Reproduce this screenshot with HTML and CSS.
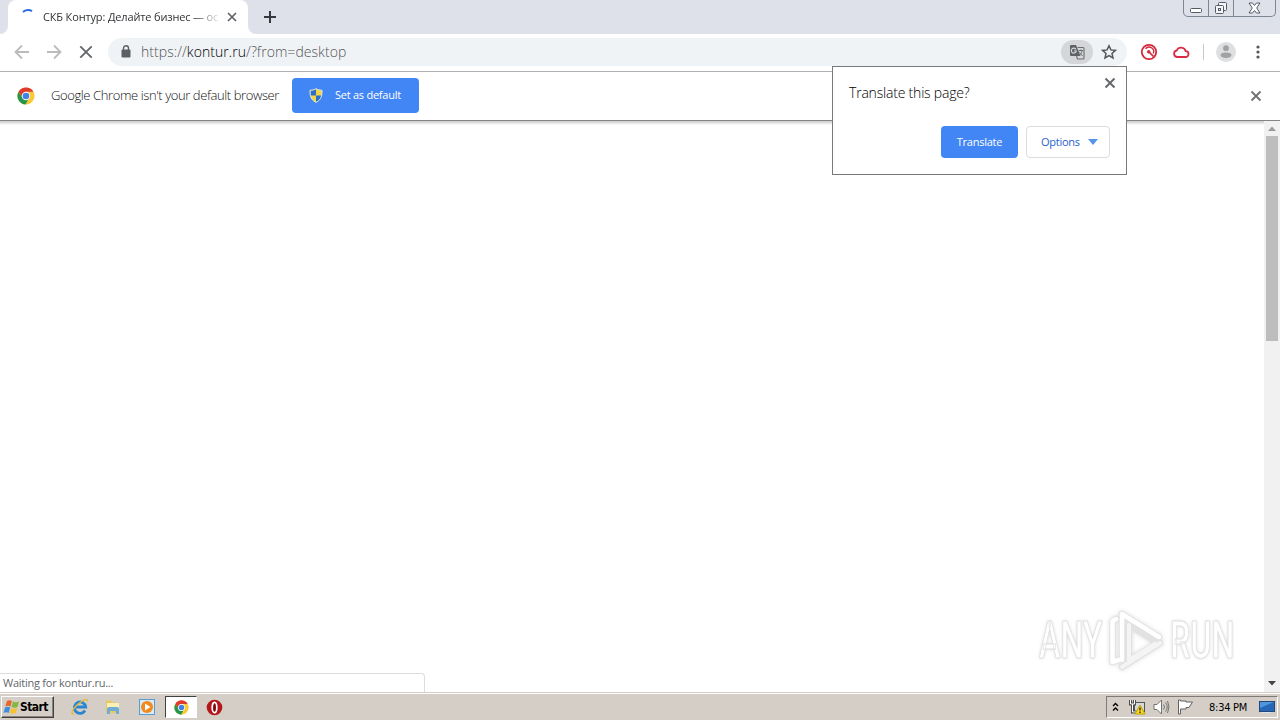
FILE: index.html
```html
<!DOCTYPE html>
<html lang="en">
<head>
    <meta charset="UTF-8">
    <meta name="viewport" content="width=device-width, initial-scale=1.0">
    <title>Desktop</title>
    <link rel="stylesheet" href="styles.css">
</head>
<body>
    <div class="screen">
        <div class="tab-strip">
            <div class="strip-edge"></div>
            <div class="tab">
                <svg class="spinner" width="16" height="16" viewBox="0 0 16 16"><path d="M3 5C5.500 2.600 9.500 2.300 12 4.200" fill="none" stroke="#2b6fe0" stroke-width="2"/></svg>
                <span class="tab-title">СКБ Контур: Делайте бизнес — ос</span>
                <svg width="10" height="10" viewBox="0 0 10 10"><path d="M1 1l8 8M9 1L1 9" stroke="#5f6367" stroke-width="1.700"/></svg>
            </div>
            <div class="strip-rest">
                <svg class="new-tab" width="14" height="14" viewBox="0 0 14 14"><path d="M7 1v12M1 7h12" stroke="#35393d" stroke-width="2"/></svg>
                <div class="window-controls">
                    <div class="control"><svg width="12" height="16" viewBox="0 0 12 16"><rect x=".5" y="8.500" width="11" height="4" rx="1" fill="#fff" stroke="#555b66"/></svg></div>
                    <div class="control"><svg width="14" height="14" viewBox="0 0 14 14" fill="#f4f5f8" stroke="#555b66"><rect x="4.500" y="1.500" width="8" height="8" rx="1"/><rect x="1.500" y="4.500" width="8" height="8" rx="1"/><rect x="4.500" y="7.500" width="2" height="2"/></svg></div>
                    <div class="control control-close"><svg width="13" height="12" viewBox="0 0 13 12"><path d="M1 1h3.500l2 2.500 2-2.500H12L8.700 6l3.300 5H8.500l-2-2.500-2 2.500H1l3.300-5z" fill="#fff" stroke="#555b66"/></svg></div>
                </div>
            </div>
        </div>

        <div class="toolbar">
            <div class="nav">
                <svg width="16" height="16" viewBox="0 0 16 16"><path d="M15 8H2M8 1.500L1.500 8 8 14.500" fill="none" stroke="#b9bbbd" stroke-width="1.800"/></svg>
                <svg width="16" height="16" viewBox="0 0 16 16"><path d="M1 8h13M8 1.500L14.500 8 8 14.500" fill="none" stroke="#b9bbbd" stroke-width="1.800"/></svg>
                <svg width="16" height="16" viewBox="0 0 16 16"><path d="M2.300 2.300l11.400 11.400M13.700 2.300L2.300 13.700" stroke="#64676b" stroke-width="1.900"/></svg>
            </div>
            <div class="omnibox">
                <svg width="10" height="13" viewBox="0 0 10 13"><rect x=".5" y="4.500" width="9" height="8" rx="1" fill="#5c6064"/><path d="M2.500 5V3.300a2.500 2.500 0 0 1 5 0V5" fill="none" stroke="#5c6064" stroke-width="1.400"/></svg>
                <div class="url">https://<span class="host">kontur.ru</span>/?from=desktop</div>
                <div class="translate-chip">
                    <svg width="16" height="16" viewBox="0 0 16 16"><path d="M2 1h5l4.500 11H2a1 1 0 0 1-1-1V2a1 1 0 0 1 1-1z" fill="#5f6368"/><path d="M8.500 3.500H14a1 1 0 0 1 1 1V14a1 1 0 0 1-1 1H8.500L7.500 12" fill="none" stroke="#696d72" stroke-width="1.100"/><path d="M7 5.400A2.500 2.500 0 1 0 7.300 7H5" fill="none" stroke="#d8dadc" stroke-width="1.100"/><path d="M9.500 6.500H14M11.800 5.500v1M13 7c-.5 2-1.500 3.500-3 4.500M10.500 8.500l3 3.500" fill="none" stroke="#696d72"/></svg>
                </div>
                <svg width="16" height="16" viewBox="0 0 16 16"><path d="M8 1.800l1.900 4.100 4.500.5-3.400 3 1 4.500L8 11.600l-4 2.300 1-4.500-3.400-3 4.500-.5z" fill="none" stroke="#54585c" stroke-width="1.500"/></svg>
            </div>
            <div class="extensions">
                <svg width="18" height="18" viewBox="0 0 18 18" fill="none" stroke="#d5283b"><circle cx="9" cy="9" r="7.200" stroke-width="1.800"/><path d="M5.500 5.800A4.600 4.600 0 0 1 13.300 10.500" stroke-width="1.400"/><path d="M9 9l4.500 4.500" stroke-width="1.700"/><circle cx="8.700" cy="8.800" r="1.300" fill="#d5283b"/></svg>
                <svg width="18" height="18" viewBox="0 0 18 18"><path d="M5 14h8.500a2.900 2.900 0 0 0 .2-5.800 4.800 4.800 0 0 0-9-.7A3.300 3.300 0 0 0 5 14z" fill="none" stroke="#d92b45" stroke-width="1.800"/></svg>
            </div>
            <div class="divider"></div>
            <svg class="avatar" width="20" height="20" viewBox="0 0 20 20"><circle cx="10" cy="10" r="10" fill="#dedfe0"/><circle cx="10" cy="6.200" r="2.900" fill="#a0a2a4"/><path d="M4.500 13c0-3.300 11-3.300 11 0 0 4-11 4-11 0z" fill="#a0a2a4"/></svg>
            <svg width="4" height="14" viewBox="0 0 4 14" fill="#54585c"><circle cx="2" cy="2" r="1.600"/><circle cx="2" cy="7" r="1.600"/><circle cx="2" cy="12" r="1.600"/></svg>
        </div>

        <div class="infobar">
            <svg class="infobar-logo" width="18" height="18" viewBox="0 0 20 20"><use href="#chrome"/></svg>
            <span class="infobar-text">Google Chrome isn't your default browser</span>
            <div class="btn btn-default">
                <svg width="14" height="15" viewBox="0 0 14 15"><path d="M7 .5C5 1.800 3 2 1 2c-.2 6 1 10 6 12.500C12 12 13.200 8 13 2 11 2 9 1.800 7 .5z" fill="#f5d548"/><path d="M7 1C5 2.200 3 2.500 1.500 2.500V7.500H7zM7 7.500h5.700C12.200 10.500 10.500 12.700 7 14z" fill="#2d6fc7"/><path d="M7 .7C5 2 3 2.200 1 2.200c-.2 5.800 1 9.800 6 12.100 5-2.300 6.200-6.300 6-12.100-2 0-4-.2-6-1.500z" fill="none" stroke="#d7e4e8"/></svg>
                <span>Set as default</span>
            </div>
            <svg class="infobar-close" width="12" height="12" viewBox="0 0 12 12"><path d="M1.500 1.500l9 9M10.500 1.500l-9 9" stroke="#6d7073" stroke-width="1.800"/></svg>
        </div>

        <div class="viewport">
            <div class="page">
                <div class="watermark">
                    <span class="wm-text">ANY</span>
                    <svg class="wm-logo" width="60" height="66" viewBox="0 0 60 66" fill="none" stroke-linejoin="round" stroke-linecap="round">
                        <g stroke="#e2e2e2" stroke-width="6.500"><path d="M9 11L5.500 13v41l6-2"/><path d="M15 52V6l37 23"/><path d="M15 59L53 35"/><path d="M22 52V17l29 18-30 18"/></g>
                        <g stroke="#fff" stroke-width="4.500"><path d="M9 11L5.500 13v41l6-2"/><path d="M15 52V6l37 23"/></g>
                        <g stroke="#f4f4f4" stroke-width="4"><path d="M15 59L53 35"/><path d="M22 17v35l26-16"/></g>
                    </svg>
                    <span class="wm-text">RUN</span>
                </div>
                <div class="status-bubble">Waiting for kontur.ru...</div>
            </div>
            <div class="scrollbar">
                <svg width="16" height="14" viewBox="0 0 16 14"><path d="M4 9L8 4.500 12 9z" fill="#9a9a9a"/></svg>
                <div class="thumb"></div>
                <svg class="scroll-down" width="16" height="17" viewBox="0 0 16 17"><path d="M4 6h8l-4 4.500z" fill="#464646"/></svg>
            </div>
        </div>

        <div class="taskbar">
            <div class="start">
                <svg width="17" height="16" viewBox="0 0 17 16"><path d="M4 2c2-1 3-.8 5 0L7.500 7.500C5.500 6.500 4 6.700 2.300 7.500z" fill="#e7662c"/><path d="M10 2.500c2 1 4 .8 6 0L14.500 8c-2 1-4 .8-6 0z" fill="#83b943"/><path d="M2 8.500c2-1 3.500-.8 5.200 0L5.700 14c-2-1-3.500-.8-5.200 0z" fill="#3f8ede"/><path d="M8.200 9c2 1 4 .8 6 0l-1.500 5c-2 1-4 .8-6 0z" fill="#f5c332"/></svg>
                <span>Start</span>
            </div>
            <div class="quick-launch">
                <svg width="18" height="18" viewBox="0 0 18 18" fill="none"><path d="M14 12.500A5.700 5.700 0 1 1 14.700 9H5" stroke="#2b86cf" stroke-width="2.800"/><path d="M3 16C-.5 17 .5 12 6 7S17-.5 16.300 3.500" stroke="#e6b83b" stroke-width="1.400"/></svg>
                <svg width="18" height="18" viewBox="0 0 18 18"><path d="M2 2.500h5l1.500 2H15V15H2z" fill="#e8c865"/><path d="M3 5h12v5H3z" fill="#faf0b8"/><path d="M3 16V11q0-2 2-2h8q2 0 2 2v5h-3v-3H6v3z" fill="#6fadd6"/></svg>
                <svg width="18" height="18" viewBox="0 0 18 18"><rect x="1.500" y="1.500" width="15" height="15" fill="#d9eaf7" stroke="#5b9bd0"/><circle cx="9" cy="9" r="6" fill="#f08a1d"/><path d="M7 5.500l5.500 3.500L7 12.500z" fill="#fff"/></svg>
                <div class="task-active"><svg width="15" height="15" viewBox="0 0 20 20"><g id="chrome"><circle cx="10" cy="10" r="9.500" fill="#fbc934"/><path d="M1.800 5.200A9.500 9.500 0 0 1 18.200 5.200H10L7 13z" fill="#df3a2d"/><path d="M1.800 5.200A9.500 9.500 0 0 0 9.500 19.500l4-7.500H6z" fill="#25964b"/><circle cx="10" cy="10" r="4.700" fill="#fff"/><circle cx="10" cy="10" r="3.700" fill="#4282e4"/></g></svg></div>
                <svg width="17" height="17" viewBox="0 0 17 17"><circle cx="8.500" cy="8.500" r="7.800" fill="#b4161c"/><ellipse cx="8.500" cy="8.500" rx="2.300" ry="5.200" fill="#7f080c" stroke="#fff" stroke-width="1.700"/></svg>
            </div>
            <div class="tray">
                <svg width="7" height="10" viewBox="0 0 7 10"><path d="M1 4l2.500-2.500L6 4M1 8.500L3.500 6 6 8.500" fill="none" stroke="#000" stroke-width="1.400"/></svg>
                <svg width="17" height="16" viewBox="0 0 17 16"><rect x="5.500" y="3.500" width="10" height="9" fill="#d9d9d9" stroke="#555"/><path d="M1.500 1v4h4V1M3.500 5v8h4" fill="none" stroke="#4d4d4d" stroke-width="3"/><path d="M1.500 1v4h4V1M3.500 5v8h4" fill="none" stroke="#fff"/><path d="M11 6l5 9H6z" fill="#f8d920" stroke="#bfa100"/><path d="M11 8.500v3M11 12.500V14" stroke="#222" stroke-width="1.300"/></svg>
                <svg width="17" height="16" viewBox="0 0 17 16" fill="none" stroke="#727272"><path d="M1 5.500h3L8.500 1v14L4 10.500H1z" fill="#fff"/><path d="M10.500 5.500q2 2.500 0 5M12.500 3.500q3.500 4.500 0 9M14.500 2q3 6 0 12"/></svg>
                <svg width="17" height="16" viewBox="0 0 17 16"><path d="M1.500 1v14h2v-5H9v-1.500h3L15.500 3H9V2H3.500V1z" fill="#fff" stroke="#606060"/></svg>
                <span class="clock">8:34 PM</span>
                <svg width="16" height="14" viewBox="0 0 16 14"><rect x=".5" y="1.500" width="15" height="10" fill="#2668b7" stroke="#244777"/><path d="M1 2h14L1 8z" fill="#4f96dc"/><path d="M3 12.500h9" stroke="#d9e5ed"/></svg>
            </div>
        </div>

        <div class="translate-popup">
            <div class="popup-head">
                <span class="popup-title">Translate this page?</span>
                <svg width="12" height="12" viewBox="0 0 12 12"><path d="M1.500 1.500l9 9M10.500 1.500l-9 9" stroke="#66696c" stroke-width="2"/></svg>
            </div>
            <div class="popup-actions">
                <div class="btn btn-translate"><span>Translate</span></div>
                <div class="btn btn-options"><span>Options</span><svg width="10" height="6" viewBox="0 0 10 6"><path d="M0 0h10L5 6z" fill="#5495e8"/></svg></div>
            </div>
        </div>
    </div>
</body>
</html>
```
FILE: styles.css
```css
* {
    margin: 0;
    padding: 0;
    box-sizing: border-box;
}

body {
    font-family: "Open Sans", "Noto Sans", sans-serif;
    font-size: 11px;
    color: #303336;
    overflow: hidden;
}

svg {
    display: block;
    flex-shrink: 0;
}

span {
    white-space: nowrap;
}

.screen {
    position: relative;
    display: flex;
    flex-direction: column;
    width: 1280px;
    height: 720px;
    background: #fff;
}

/* tabs */
.tab-strip {
    display: flex;
    height: 34px;
    background: #fff;
}

.strip-edge {
    width: 8px;
    background: #dee1e9;
    border-bottom-right-radius: 8px;
}

.tab {
    display: flex;
    align-items: center;
    width: 240px;
    padding: 0 11px 0 12px;
    background: linear-gradient(#dee1e9 8px, #fff 8px);
    position: relative;
    isolation: isolate;
}

.tab::before {
    content: "";
    position: absolute;
    inset: 0;
    background: #fff;
    border-radius: 8px 8px 0 0;
    z-index: -1;
}

.tab-title {
    width: 176px;
    margin-left: 7px;
    margin-right: 8px;
    padding-bottom: 2px;
    overflow: hidden;
    letter-spacing: -0.15px;
    -webkit-mask-image: linear-gradient(90deg, #000 150px, transparent 179px);
    mask-image: linear-gradient(90deg, #000 150px, transparent 179px);
}

.spinner {
    margin-top: -4px;
}

.strip-rest {
    flex: 1;
    display: flex;
    justify-content: space-between;
    padding: 0 4px 0 15px;
    background: #dee1e9;
    border-bottom-left-radius: 8px;
}

.new-tab {
    margin-top: 10px;
}

.window-controls {
    display: flex;
    width: 93px;
    height: 17px;
    border: 1px solid #7d8492;
    border-top: 0;
    border-radius: 0 0 5px 5px;
}

.control {
    display: flex;
    align-items: center;
    justify-content: center;
    width: 25px;
    border-right: 1px solid #7d8492;
}

.control-close {
    flex: 1;
    border-right: 0;
}

/* toolbar */
.toolbar {
    display: flex;
    align-items: center;
    height: 38px;
    padding: 0 20px 2px 14px;
    border-bottom: 1px solid #aeb0b2;
}

.nav {
    display: flex;
    gap: 16px;
    width: 94px;
}

.omnibox {
    display: flex;
    align-items: center;
    width: 1019px;
    height: 28px;
    padding: 0 10px 0 13px;
    background: #f0f3f5;
    border-radius: 14px;
}

.url {
    flex: 1;
    margin-left: 10px;
    font-size: 14px;
    font-weight: 300;
    letter-spacing: 0.06px;
    color: #505458;
}

.host {
    color: #000;
}

.translate-chip {
    display: flex;
    align-items: center;
    justify-content: center;
    width: 32px;
    height: 24px;
    margin-right: 8px;
    background: #d4d6d8;
    border-radius: 12px;
}

.extensions {
    display: flex;
    gap: 14px;
    margin-left: 13px;
}

.divider {
    width: 1px;
    height: 16px;
    margin: 0 12px 0 13px;
    background: #c6c8ca;
}

.avatar {
    margin-right: auto;
}

/* default browser bar */
.infobar {
    display: flex;
    align-items: center;
    height: 49px;
    padding: 0 18px 0 17px;
    border-bottom: 1px solid #858585;
}

.infobar-text {
    width: 241px;
    margin-left: 16px;
    padding-bottom: 2px;
    font-size: 13px;
    font-weight: 300;
    letter-spacing: -0.4px;
    color: #101214;
}

.infobar-close {
    margin-left: auto;
}

.btn {
    display: flex;
    align-items: center;
    border-radius: 4px;
    background: #4285f4;
    color: #fff;
    letter-spacing: -0.25px;
}

.btn span {
    padding-bottom: 2px;
}

.btn-default {
    width: 127px;
    height: 35px;
    margin-bottom: 1px;
    padding-left: 17px;
    gap: 12px;
}

/* page area */
.viewport {
    display: flex;
    height: 571px;
}

.page {
    position: relative;
    flex: 1;
    background: linear-gradient(#c8c8c8, #fff 4px);
}

.scrollbar {
    display: flex;
    flex-direction: column;
    width: 16px;
    padding-top: 1px;
    background: #f1f1f1;
}

.thumb {
    width: 12px;
    height: 205px;
    margin-left: 2px;
    background: #bdbdbd;
}

.scroll-down {
    margin-top: auto;
}

.status-bubble {
    position: absolute;
    left: 0;
    bottom: 0;
    width: 425px;
    height: 19px;
    padding-left: 3px;
    border: 1px solid #dcdcdc;
    border-width: 1px 1px 0 0;
    border-top-right-radius: 4px;
    background: #fff;
    color: #64676a;
    line-height: 18px;
    letter-spacing: -0.25px;
}

.watermark {
    position: absolute;
    left: 1039px;
    top: 488px;
    display: flex;
    width: 195px;
    height: 66px;
}

.wm-text {
    width: 66px;
    padding-top: 2px;
    font: 500 52px/60px Roboto, sans-serif;
    color: #fff;
    -webkit-text-stroke: 1px #e2e2e2;
    text-shadow: 0 0 4px #ccc;
    transform: scaleX(0.62);
    transform-origin: 0 0;
}

.wm-logo {
    margin: -1px 3px 0 2px;
    filter: drop-shadow(0 0 2px #ddd);
}

/* taskbar */
.taskbar {
    display: flex;
    align-items: center;
    height: 28px;
    padding: 1px 2px 0 1px;
    background: #d5cec6;
    border-top: 1px solid #d5cec6;
    box-shadow: inset 0 1px #fff;
}

.start {
    display: flex;
    align-items: center;
    width: 53px;
    height: 22px;
    padding-left: 1px;
    border: 1px solid;
    border-color: #fff #404040 #404040 #fff;
    box-shadow: inset -1px -1px #88837d;
    font: bold 12px "DejaVu Sans Condensed", sans-serif;
    color: #000;
}

.start span {
    letter-spacing: -0.6px;
}

.quick-launch {
    display: flex;
    align-items: center;
    margin-left: 17px;
    gap: 15px;
}

.quick-launch svg:nth-child(3) {
    margin-left: 1px;
}

.task-active {
    display: flex;
    align-items: center;
    justify-content: center;
    width: 32px;
    height: 22px;
    margin: 0 -6px 0 -6px;
    border: 1px solid;
    border-color: #404040 #fff #fff #404040;
    background: #fff;
}

.tray {
    display: flex;
    align-items: center;
    width: 172px;
    height: 22px;
    margin-left: auto;
    padding-left: 5px;
    border: 1px solid;
    border-color: #7f7a75 #fff #fff #7f7a75;
    color: #000;
}

.tray svg {
    margin-right: 7px;
}

.tray svg:first-child {
    margin-right: 10px;
}

.tray svg:last-child {
    margin-left: 6px;
    margin-right: 0;
}

.clock {
    width: 44px;
    margin-left: 8px;
    font: 11px "DejaVu Sans Condensed", sans-serif;
    letter-spacing: -0.25px;
}

/* translate popup */
.translate-popup {
    position: absolute;
    left: 832px;
    top: 66px;
    width: 295px;
    height: 109px;
    padding: 10px 16px 16px;
    border: 1px solid #797979;
    background: #fff;
}

.popup-head {
    display: flex;
    justify-content: space-between;
    height: 49px;
    margin-right: -6px;
}

.popup-title {
    padding-top: 6px;
    font-size: 14px;
    font-weight: 300;
    line-height: 20px;
    letter-spacing: -0.2px;
    color: #000;
}

.popup-actions {
    display: flex;
    justify-content: flex-end;
    gap: 8px;
}

.btn-translate {
    width: 77px;
    height: 32px;
    justify-content: center;
}

.btn-options {
    width: 84px;
    height: 32px;
    padding: 0 11px 0 14px;
    justify-content: space-between;
    background: #fff;
    border: 1px solid #dadce0;
    color: #1f63cc;
}
```
